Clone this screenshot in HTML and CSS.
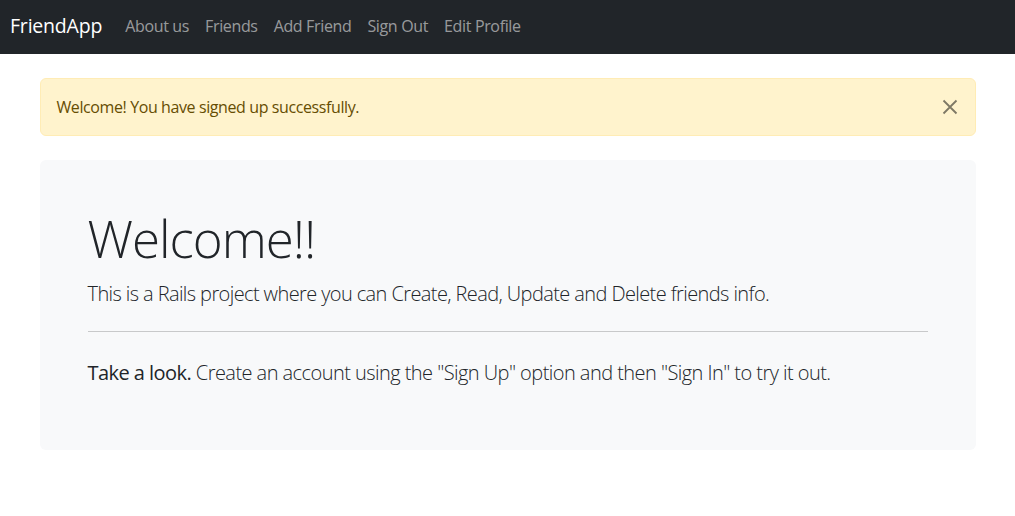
FILE: index.html
```html
<!DOCTYPE html>
<html lang="en">
<head>
<meta charset="utf-8">
<title>FriendApp</title>
<link rel="stylesheet" href="styles.css">
</head>
<body>
<nav class="navbar">
  <a class="brand" href="#">FriendApp</a>
  <ul class="nav">
    <li><a class="nav-link" href="#">About us</a></li>
    <li><a class="nav-link" href="#">Friends</a></li>
    <li><a class="nav-link" href="#">Add Friend</a></li>
    <li><a class="nav-link" href="#">Sign Out</a></li>
    <li><a class="nav-link" href="#">Edit Profile</a></li>
  </ul>
</nav>
<main class="container">
  <div class="alert">
    <span>Welcome! You have signed up successfully.</span>
    <button class="btn-close" aria-label="Close">
      <svg viewBox="0 0 16 16" width="16" height="16"><path d="M1.5 1.5L14.5 14.5M14.5 1.5L1.5 14.5" stroke="#000" stroke-width="1.8" fill="none"/></svg>
    </button>
  </div>
  <section class="jumbotron">
    <h1 class="display">Welcome!!</h1>
    <p class="lead">This is a Rails project where you can Create, Read, Update and Delete friends info.</p>
    <hr class="divider">
    <p class="lead lead-wide"><span class="strong">Take a look.</span> Create an account using the "Sign Up" option and then "Sign In" to try it out.</p>
  </section>
</main>
</body>
</html>
```
FILE: styles.css
```css
* { box-sizing: border-box; }
html, body { margin: 0; padding: 0; }
body {
  font-family: "Open Sans", "Noto Sans", "Liberation Sans", sans-serif;
  font-size: 16px;
  line-height: 1.5;
  color: #212529;
  background: #fff;
}
.navbar {
  background: #212529;
  height: 54px;
  display: flex;
  align-items: center;
  padding: 0 10px 2px;
}
.brand {
  color: #fff;
  font-size: 19.5px;
  text-decoration: none;
  margin-right: 15px;
  letter-spacing: -0.2px;
}
.nav {
  list-style: none;
  margin: 0;
  padding: 0;
  display: flex;
}
.nav-link {
  display: block;
  padding: 8px 8px;
  color: rgba(255,255,255,0.55);
  text-decoration: none;
  font-size: 16px;
  letter-spacing: -0.35px;
}
.container {
  width: 936px;
  margin: 24px auto 0;
}
.alert {
  position: relative;
  background: #fff3cd;
  border: 1px solid #ffecb5;
  border-radius: 6px;
  color: #664d03;
  padding: 16px 48px 16px 16px;
  font-size: 16px;
  letter-spacing: -0.4px;
  height: 58px;
  display: flex;
  align-items: center;
}
.btn-close {
  position: absolute;
  top: 0;
  right: 0;
  height: 56px;
  width: 50px;
  padding: 0;
  border: 0;
  background: transparent;
  opacity: 0.5;
  display: flex;
  align-items: center;
  justify-content: center;
}
.jumbotron {
  margin-top: 24px;
  background: #f8f9fa;
  border-radius: 6px;
  padding: 48px;
  height: 290px;
}
.display {
  margin: 0 0 8px;
  font-size: 51px;
  font-weight: 300;
  line-height: 61px;
  letter-spacing: -1px;
}
.lead {
  margin: 0 0 16px;
  font-size: 20px;
  font-weight: 300;
  padding-top: 4px;
  line-height: 26px;
  letter-spacing: -0.6px;
}
.lead-wide { letter-spacing: -0.55px; }
.strong { font-weight: 400; }
.divider {
  margin: 24px 0;
  border: 0;
  border-top: 1px solid #c8c9ca;
}
```
